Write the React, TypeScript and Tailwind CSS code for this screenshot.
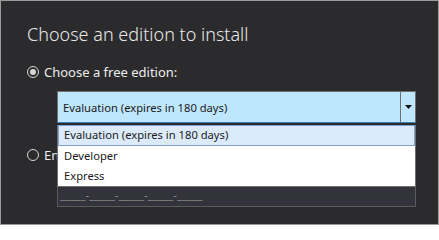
import { useState } from 'react';

const editions = ['Evaluation (expires in 180 days)', 'Developer', 'Express'];

function Radio({ checked }: { checked: boolean }) {
    return (
        <span className="flex h-[12px] w-[12px] shrink-0 items-center justify-center rounded-full border border-[#d8d8d8] bg-[#2b2b2d]">
            {checked && <span className="h-[6px] w-[6px] rounded-full bg-[#d8d8d8]" />}
        </span>
    );
}

export default function App() {
    const [selected] = useState(0);

    return (
        <div
            className="relative h-[225px] w-[439px] overflow-hidden border border-[#9a9a9a] bg-[#2b2b2d] text-[#ececec]"
            style={{ fontFamily: '"Noto Sans", "Open Sans", sans-serif' }}
        >
            <div className="pl-[26px] pt-[21px]">
                <h1 className="text-[18px] font-light leading-[24px] text-[#e8e8e8]">
                    Choose an edition to install
                </h1>

                <div className="mt-[17px] flex items-center gap-[5px] text-[13px] leading-[18px]">
                    <Radio checked />
                    <span>Choose a free edition:</span>
                </div>

                {/* Combo box */}
                <div className="ml-[30px] mt-[10px] flex h-[32px] w-[359px] border border-[#6f6f6f] border-b-[#3c7fb1] bg-[#bee6fd] text-[11.2px] text-[#1a1a1a]">
                    <div className="flex flex-1 items-center pl-[5px] pt-[2px]">{editions[selected]}</div>
                    <div className="flex w-[15px] items-center justify-center border-l border-[#6f6f6f]">
                        <svg width="7" height="4" viewBox="0 0 7 4">
                            <path d="M0 0h7L3.5 4z" fill="#111" />
                        </svg>
                    </div>
                </div>

                <div className="mt-[23px] flex items-center gap-[5px] text-[13px] leading-[18px]">
                    <Radio checked={false} />
                    <span>Enter the product key:</span>
                </div>

                {/* Product key box */}
                <div className="ml-[30px] mt-[11px] flex h-[32px] w-[359px] items-center border border-[#5a5a5a] bg-[#32333b] pl-[2px] pt-[7px] text-[11.5px] text-[#8c8c8c]">
                    _____-_____-_____-_____-_____
                </div>
            </div>

            {/* Open dropdown list */}
            <div className="absolute left-[56px] top-[124px] w-[359px] border border-[#6f6f6f] border-t-0 bg-white text-[11.2px] text-[#1a1a1a]">
                {editions.map((e, i) => (
                    <div
                        key={e}
                        className={
                            i === selected
                                ? 'flex h-[21px] items-center border border-[#7da2ce] bg-[#dcebfc] pl-[5px]'
                                : 'flex h-[20px] items-center border border-transparent pl-[5px]'
                        }
                    >
                        {e}
                    </div>
                ))}
            </div>
        </div>
    );
}
